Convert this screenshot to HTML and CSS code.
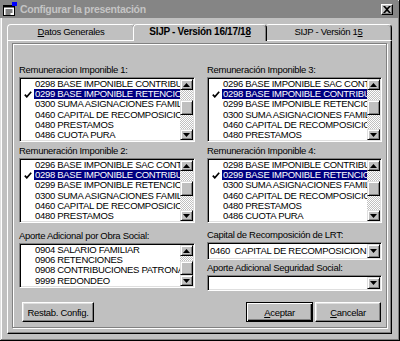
FILE: index.html
```html
<!DOCTYPE html>
<html lang="es">
<head>
  <meta charset="UTF-8" />
  <title>Configurar la presentación</title>
  <link rel="stylesheet" href="styles.css">
</head>
<body>
  <div class="window">
    <div class="titlebar">
      <svg class="app-icon" width="14" height="14" viewBox="0 0 14 14">
        <rect x="0.5" y="3.5" width="11" height="10" fill="#fff" stroke="#000"/>
        <rect x="0.5" y="3.5" width="11" height="2" fill="#000"/>
        <path d="M2.5 8h7M2.5 10h7M2.5 12h5" stroke="#000"/>
        <rect x="9" y="0" width="5" height="4" fill="#00f"/>
      </svg>
      <span class="title">Configurar la presentación</span>
      <span class="close">
        <svg width="8" height="7" viewBox="0 0 8 7"><path d="M0 0l2 0 2 2 2-2 2 0-3 3.5 3 3.5-2 0-2-2-2 2-2 0 3-3.5z" fill="#000"/></svg>
      </span>
    </div>

    <div class="tabs">
      <div class="tab tab-general"><u>D</u>atos Generales</div>
      <div class="tab tab-active">SIJP - Versión 16/17/1<u>8</u></div>
      <div class="tab tab-v15">SIJP - Versión 1<u>5</u></div>
    </div>

    <div class="panel">
      <div class="group">
        <div class="cols">
          <div class="col">
            <label class="field-label">Remuneracion Imponible 1:</label>
            <div class="listbox rows6">
              <ul class="items">
                <li><span class="chk"></span><span class="txt">0298 BASE IMPONIBLE CONTRIBUTIVA</span></li>
                <li class="selected"><span class="chk"><svg width="8" height="7" viewBox="0 0 8 7"><path d="M0.8 3.6l2 2.2 4.4-5" fill="none" stroke="#000" stroke-width="1.7"/></svg></span><span class="txt">0299 BASE IMPONIBLE RETENCIONES</span></li>
                <li><span class="chk"></span><span class="txt">0300 SUMA ASIGNACIONES FAMILIARES</span></li>
                <li><span class="chk"></span><span class="txt">0460 CAPITAL DE RECOMPOSICION</span></li>
                <li><span class="chk"></span><span class="txt">0480 PRESTAMOS</span></li>
                <li><span class="chk"></span><span class="txt">0486 CUOTA PURA</span></li>
              </ul>
              <div class="scrollbar">
                <span class="sb-btn"><svg width="7" height="4" viewBox="0 0 7 4"><path d="M3.5 0L7 4H0z"/></svg></span>
                <span class="track track-top"></span>
                <span class="thumb"></span>
                <span class="track"></span>
                <span class="sb-btn"><svg width="7" height="4" viewBox="0 0 7 4"><path d="M0 0h7L3.5 4z"/></svg></span>
              </div>
            </div>

            <label class="field-label gap-s">Remuneración Imponible 2:</label>
            <div class="listbox rows6">
              <ul class="items">
                <li><span class="chk"></span><span class="txt">0296 BASE IMPONIBLE SAC CONTRIBUCIONES</span></li>
                <li class="selected"><span class="chk"><svg width="8" height="7" viewBox="0 0 8 7"><path d="M0.8 3.6l2 2.2 4.4-5" fill="none" stroke="#000" stroke-width="1.7"/></svg></span><span class="txt">0298 BASE IMPONIBLE CONTRIBUTIVA</span></li>
                <li><span class="chk"></span><span class="txt">0299 BASE IMPONIBLE RETENCIONES</span></li>
                <li><span class="chk"></span><span class="txt">0300 SUMA ASIGNACIONES FAMILIARES</span></li>
                <li><span class="chk"></span><span class="txt">0460 CAPITAL DE RECOMPOSICION</span></li>
                <li><span class="chk"></span><span class="txt">0480 PRESTAMOS</span></li>
              </ul>
              <div class="scrollbar">
                <span class="sb-btn"><svg width="7" height="4" viewBox="0 0 7 4"><path d="M3.5 0L7 4H0z"/></svg></span>
                <span class="track track-top"></span>
                <span class="thumb"></span>
                <span class="track"></span>
                <span class="sb-btn"><svg width="7" height="4" viewBox="0 0 7 4"><path d="M0 0h7L3.5 4z"/></svg></span>
              </div>
            </div>

            <label class="field-label gap-l">Aporte Adicional por Obra Social:</label>
            <div class="listbox rows4">
              <ul class="items">
                <li><span class="chk"></span><span class="txt">0904 SALARIO FAMILIAR</span></li>
                <li><span class="chk"></span><span class="txt">0906 RETENCIONES</span></li>
                <li><span class="chk"></span><span class="txt">0908 CONTRIBUCIONES PATRONALES</span></li>
                <li><span class="chk"></span><span class="txt">9999 REDONDEO</span></li>
              </ul>
              <div class="scrollbar">
                <span class="sb-btn"><svg width="7" height="4" viewBox="0 0 7 4"><path d="M3.5 0L7 4H0z"/></svg></span>
                <span class="track track-short"></span>
                <span class="thumb"></span>
                <span class="track"></span>
                <span class="sb-btn"><svg width="7" height="4" viewBox="0 0 7 4"><path d="M0 0h7L3.5 4z"/></svg></span>
              </div>
            </div>
          </div>

          <div class="col col-right">
            <label class="field-label">Remuneración Imponible 3:</label>
            <div class="listbox rows6">
              <ul class="items">
                <li><span class="chk"></span><span class="txt">0296 BASE IMPONIBLE SAC CONTRIBUCIONES</span></li>
                <li class="selected"><span class="chk"><svg width="8" height="7" viewBox="0 0 8 7"><path d="M0.8 3.6l2 2.2 4.4-5" fill="none" stroke="#000" stroke-width="1.7"/></svg></span><span class="txt">0298 BASE IMPONIBLE CONTRIBUTIVA</span></li>
                <li><span class="chk"></span><span class="txt">0299 BASE IMPONIBLE RETENCIONES</span></li>
                <li><span class="chk"></span><span class="txt">0300 SUMA ASIGNACIONES FAMILIARES</span></li>
                <li><span class="chk"></span><span class="txt">0460 CAPITAL DE RECOMPOSICION</span></li>
                <li><span class="chk"></span><span class="txt">0480 PRESTAMOS</span></li>
              </ul>
              <div class="scrollbar">
                <span class="sb-btn"><svg width="7" height="4" viewBox="0 0 7 4"><path d="M3.5 0L7 4H0z"/></svg></span>
                <span class="track track-top"></span>
                <span class="thumb"></span>
                <span class="track"></span>
                <span class="sb-btn"><svg width="7" height="4" viewBox="0 0 7 4"><path d="M0 0h7L3.5 4z"/></svg></span>
              </div>
            </div>

            <label class="field-label gap-s">Remuneración Imponible 4:</label>
            <div class="listbox rows6">
              <ul class="items">
                <li><span class="chk"></span><span class="txt">0298 BASE IMPONIBLE CONTRIBUTIVA</span></li>
                <li class="selected"><span class="chk"><svg width="8" height="7" viewBox="0 0 8 7"><path d="M0.8 3.6l2 2.2 4.4-5" fill="none" stroke="#000" stroke-width="1.7"/></svg></span><span class="txt">0299 BASE IMPONIBLE RETENCIONES</span></li>
                <li><span class="chk"></span><span class="txt">0300 SUMA ASIGNACIONES FAMILIARES</span></li>
                <li><span class="chk"></span><span class="txt">0460 CAPITAL DE RECOMPOSICION</span></li>
                <li><span class="chk"></span><span class="txt">0480 PRESTAMOS</span></li>
                <li><span class="chk"></span><span class="txt">0486 CUOTA PURA</span></li>
              </ul>
              <div class="scrollbar">
                <span class="sb-btn"><svg width="7" height="4" viewBox="0 0 7 4"><path d="M3.5 0L7 4H0z"/></svg></span>
                <span class="track track-top"></span>
                <span class="thumb"></span>
                <span class="track"></span>
                <span class="sb-btn"><svg width="7" height="4" viewBox="0 0 7 4"><path d="M0 0h7L3.5 4z"/></svg></span>
              </div>
            </div>

            <label class="field-label gap-m">Capital de Recomposición de LRT:</label>
            <div class="combo combo-tall">
              <span class="combo-value">0460  CAPITAL DE RECOMPOSICION</span>
              <span class="combo-btn"><svg width="7" height="4" viewBox="0 0 7 4"><path d="M0 0h7L3.5 4z"/></svg></span>
            </div>

            <label class="field-label gap-xs">Aporte Adicional Seguridad Social:</label>
            <div class="combo">
              <span class="combo-value"></span>
              <span class="combo-btn"><svg width="7" height="4" viewBox="0 0 7 4"><path d="M0 0h7L3.5 4z"/></svg></span>
            </div>
          </div>
        </div>

        <div class="actions">
          <button class="btn btn-reset">Restab. Config.</button>
          <div class="actions-right">
            <button class="btn btn-default"><u>A</u>ceptar</button>
            <button class="btn"><u>C</u>ancelar</button>
          </div>
        </div>
      </div>
    </div>
  </div>
</body>
</html>
```

FILE: styles.css
```css
* {
  box-sizing: border-box;
}

body {
  margin: 0;
  background: #c0c0c0;
  font-family: "Liberation Sans", Arial, sans-serif;
  font-size: 9.5px;
  letter-spacing: -0.3px;
  color: #000;
}

.window {
  width: 400px;
  height: 341px;
  background: #c0c0c0;
  box-shadow: inset -1px -1px #000, inset 1px 1px #dfdfdf, inset -2px -2px #808080, inset 2px 2px #fff;
  overflow: hidden;
}

/* title bar (inactive) */
.titlebar {
  height: 18px;
  margin: 0 2px 0 0;
  background: #858585;
  display: flex;
  align-items: center;
  padding: 0 5px 0 3px;
}

.app-icon {
  flex: none;
  margin-right: 3px;
}

.title {
  flex: 1;
  color: #c4c4c4;
  font-size: 10.5px;
  font-weight: bold;
  white-space: nowrap;
}

.close {
  width: 12px;
  height: 11px;
  display: flex;
  align-items: center;
  justify-content: center;
  background: #c0c0c0;
  border: 1px solid;
  border-color: #fff #000 #000 #fff;
  box-shadow: inset -1px -1px #808080;
}

/* tabs */
.tabs {
  display: flex;
  align-items: flex-start;
  height: 16px;
  margin-top: 6px;
  padding-left: 7px;
}

.tab {
  height: 16px;
  line-height: 14px;
  text-align: center;
  white-space: nowrap;
  background: #c0c0c0;
  border: 1px solid;
  border-bottom: none;
  border-color: #fff #000 #000 #fff;
  border-radius: 4px 4px 0 0;
  box-shadow: inset -1px 0 #808080;
}

.tab-general {
  width: 128px;
}

.tab-active {
  position: relative;
  width: 134px;
  height: 17px;
  margin: 0 -2px;
  font-size: 10px;
  font-weight: bold;
}

.tab-v15 {
  width: 127px;
}

/* tab page */
.panel {
  margin-left: 7px;
  width: 385px;
  height: 294px;
  border: 1px solid;
  border-color: #fff #000 #000 #fff;
  box-shadow: inset -1px -1px #808080;
  padding: 2px 4px 5px 4px;
}

.group {
  height: 285px;
  border: 1px solid #808080;
  box-shadow: inset 1px 1px #fff, 1px 1px #fff;
  padding: 19px 4px 5px 6px;
}

.cols {
  display: flex;
  gap: 12px;
}

.col {
  width: 176px;
  display: flex;
  flex-direction: column;
}

.col-right {
  width: 175px;
}

.field-label {
  display: block;
  height: 14px;
  line-height: 14px;
  white-space: nowrap;
}

.gap-xs {
  margin-top: 1px;
}

.gap-s {
  margin-top: 2px;
}

.gap-m {
  margin-top: 5px;
}

.gap-l {
  margin-top: 6px;
}

/* list boxes */
.listbox {
  display: flex;
  background: #fff;
  border: 1px solid;
  border-color: #808080 #fff #fff #808080;
  box-shadow: inset 1px 1px #000, inset -1px -1px #dfdfdf;
  padding: 1px;
}

.rows6 {
  height: 65px;
}

.rows4 {
  height: 45px;
}

.items {
  flex: 1;
  min-width: 0;
  margin: 0;
  padding: 0;
  list-style: none;
  overflow: hidden;
}

.items li {
  display: flex;
  height: 10.2px;
  line-height: 10.2px;
  white-space: nowrap;
}

.chk {
  flex: none;
  width: 13px;
  display: flex;
  align-items: center;
  justify-content: center;
  padding-left: 1px;
}

.txt {
  flex: 1;
  padding-left: 1px;
  overflow: hidden;
}

.selected .txt {
  background: #000080;
  color: #fff;
}

.scrollbar {
  flex: none;
  width: 13px;
  display: flex;
  flex-direction: column;
}

.sb-btn,
.thumb,
.combo-btn {
  flex: none;
  display: flex;
  align-items: center;
  justify-content: center;
  background: #c0c0c0;
  border: 1px solid;
  border-color: #dfdfdf #000 #000 #dfdfdf;
  box-shadow: inset 1px 1px #fff, inset -1px -1px #808080;
}

.sb-btn {
  height: 11px;
}

.thumb {
  height: 15px;
}

.rows4 .thumb {
  height: 14px;
}

.track {
  flex: 1;
  background-image: repeating-conic-gradient(#fff 0 25%, #c0c0c0 0 50%);
  background-size: 2px 2px;
}

.track-top {
  flex: none;
  height: 10px;
}

.track-short {
  flex: none;
  height: 5px;
}

/* combo boxes */
.combo {
  display: flex;
  height: 16px;
  background: #fff;
  border: 1px solid;
  border-color: #808080 #fff #fff #808080;
  box-shadow: inset 1px 1px #000, inset -1px -1px #dfdfdf;
  padding: 1px;
}

.combo-tall {
  height: 18px;
}

.combo-value {
  flex: 1;
  padding-left: 1px;
  white-space: pre;
  overflow: hidden;
  line-height: 12px;
}

.combo-tall .combo-value {
  line-height: 14px;
}

.combo-btn {
  width: 13px;
}

/* buttons */
.actions {
  display: flex;
  justify-content: space-between;
  margin-top: 11px;
  padding: 0 1px 0 3px;
}

.actions-right {
  display: flex;
  gap: 2px;
}

.btn {
  height: 20px;
  width: 66px;
  padding: 0;
  font: inherit;
  letter-spacing: inherit;
  white-space: nowrap;
  color: #000;
  background: #c0c0c0;
  border: 1px solid;
  border-color: #fff #000 #000 #fff;
  box-shadow: inset -1px -1px #808080, inset 1px 1px #dfdfdf;
}

.btn-reset {
  width: 72px;
}

.btn-default {
  width: 67px;
  border-color: #000;
  box-shadow: inset 1px 1px #fff, inset -1px -1px #000, inset -2px -2px #808080;
}
```
